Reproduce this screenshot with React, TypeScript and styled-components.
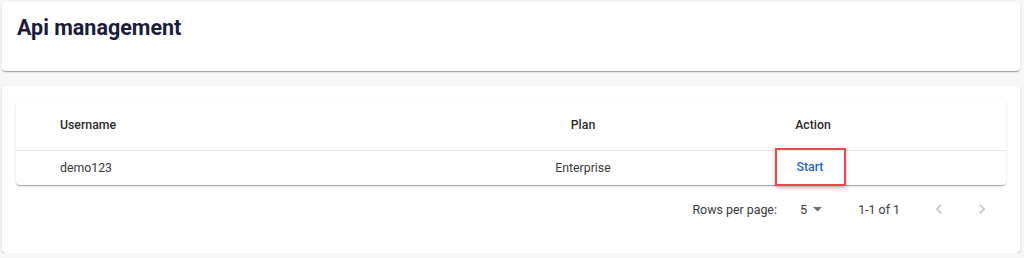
import React from "react";
import styled, { createGlobalStyle } from "styled-components";

const Global = createGlobalStyle`
  html, body { margin: 0; padding: 0; }
  body {
    background: #f7f7f7;
    font-family: Roboto, "Liberation Sans", Arial, sans-serif;
    color: rgba(0,0,0,0.87);
  }
`;

const Page = styled.div`
  display: flex;
  flex-direction: column;
  gap: 15px;
  padding: 2px 4px 0 2px;
`;

const shadow = `0 2px 1px -1px rgba(0,0,0,0.2), 0 1px 1px 0 rgba(0,0,0,0.14), 0 1px 3px 0 rgba(0,0,0,0.12)`;

const Card = styled.div`
  background: #fff;
  border-radius: 4px;
  box-shadow: ${shadow};
`;

const HeaderCard = styled(Card)`
  height: 69px;
  box-sizing: border-box;
  padding: 13px 15px;
`;

const Title = styled.h1`
  margin: 0;
  font-size: 21.5px;
  line-height: 26px;
  font-weight: 700;
  color: #1b1b3b;
`;

const ContentCard = styled(Card)`
  padding: 14px 14px 20px 14px;
`;

const TablePaper = styled.div`
  background: #fff;
  border-radius: 4px;
  box-shadow: ${shadow};
`;

const Row = styled.div<{ $head?: boolean }>`
  display: grid;
  grid-template-columns: 454px 226px 234px 1fr;
  align-items: center;
  height: ${(p) => (p.$head ? "50px" : "34px")};
  border-bottom: ${(p) => (p.$head ? "1px solid #e6e6e6" : "none")};
  font-size: 12.3px;
  font-weight: ${(p) => (p.$head ? 500 : 400)};
  color: ${(p) => (p.$head ? "#2b2b2b" : "#3a3a3a")};
`;

const Cell = styled.div<{ $align?: "left" | "center" }>`
  text-align: ${(p) => p.$align ?? "left"};
  padding-left: ${(p) => (p.$align === "center" ? "0" : "44px")};
  display: flex;
  justify-content: ${(p) => (p.$align === "center" ? "center" : "flex-start")};
`;

const StartButton = styled.button`
  position: relative;
  width: 67px;
  height: 34px;
  margin-top: -3px;
  margin-left: -6px;
  background: transparent;
  border: none;
  font-family: inherit;
  font-size: 12.3px;
  font-weight: 500;
  color: #1f63cf;
  cursor: pointer;
  &::after {
    content: "";
    position: absolute;
    inset: -2px;
    border: 2px solid #f0474b;
    box-shadow: 0 2px 4px rgba(0,0,0,0.25);
    pointer-events: none;
  }
`;

const Pagination = styled.div`
  height: 48px;
  display: flex;
  align-items: center;
  justify-content: flex-end;
  padding-right: 9px;
  font-size: 12.4px;
  color: #3a3a3a;
`;

const Label = styled.span`
  margin-right: 23px;
`;

const Select = styled.span`
  display: inline-flex;
  align-items: center;
  gap: 6px;
  margin-right: 36px;
  font-size: 12.8px;
`;

const Range = styled.span`
  margin-right: 24px;
`;

const PageBtn = styled.span`
  width: 30px;
  height: 30px;
  display: inline-flex;
  align-items: center;
  justify-content: center;
  & + & { margin-left: 13px; }
`;

const Chevron = ({ dir }: { dir: "left" | "right" }) => (
  <svg width="20" height="20" viewBox="0 0 24 24">
    <path
      d={dir === "left" ? "M15.41 7.41 14 6l-6 6 6 6 1.41-1.41L10.83 12z" : "M10 6 8.59 7.41 13.17 12l-4.58 4.59L10 18l6-6z"}
      fill="#c6c6c6"
    />
  </svg>
);

export default function App() {
  return (
    <>
      <Global />
      <Page>
        <HeaderCard>
          <Title>Api management</Title>
        </HeaderCard>
        <ContentCard>
          <TablePaper>
            <Row $head>
              <Cell>Username</Cell>
              <Cell $align="center">Plan</Cell>
              <Cell $align="center">Action</Cell>
              <Cell />
            </Row>
            <Row>
              <Cell>demo123</Cell>
              <Cell $align="center">Enterprise</Cell>
              <Cell $align="center">
                <StartButton>Start</StartButton>
              </Cell>
              <Cell />
            </Row>
          </TablePaper>
          <Pagination>
            <Label>Rows per page:</Label>
            <Select>
              5
              <svg width="9" height="5" viewBox="0 0 9 5">
                <path d="M0 0 L9 0 L4.5 4.5 Z" fill="#707070" />
              </svg>
            </Select>
            <Range>1-1 of 1</Range>
            <PageBtn>
              <Chevron dir="left" />
            </PageBtn>
            <PageBtn>
              <Chevron dir="right" />
            </PageBtn>
          </Pagination>
        </ContentCard>
      </Page>
    </>
  );
}
